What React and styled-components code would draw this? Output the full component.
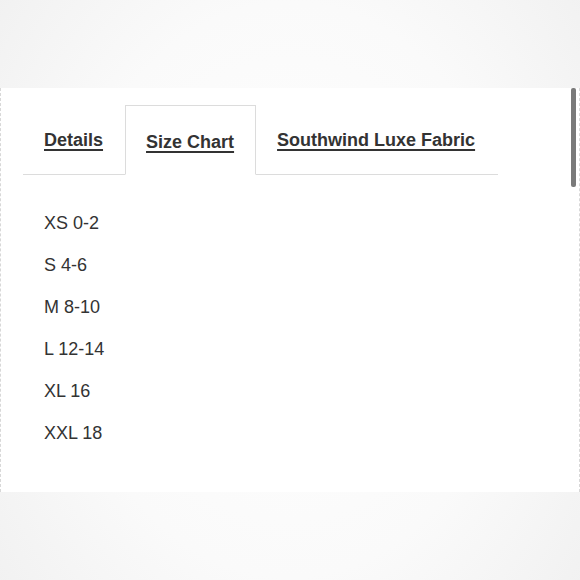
import { useState } from "react";
import styled, { createGlobalStyle } from "styled-components";

const GlobalStyle = createGlobalStyle`
  html, body {
    margin: 0;
    padding: 0;
    width: 580px;
    height: 580px;
    overflow: hidden;
  }
  body {
    background: radial-gradient(ellipse 70% 90% at 50% 50%, #ffffff 0%, #fafafa 55%, #efefef 100%);
    font-family: "Liberation Sans", Arial, sans-serif;
    color: #333;
  }
`;

const tabs = ["Details", "Size Chart", "Southwind Luxe Fabric"];
const sizes = ["XS 0-2", "S 4-6", "M 8-10", "L 12-14", "XL 16", "XXL 18"];

export default function App() {
  const [active, setActive] = useState(1);

  return (
    <>
      <GlobalStyle />
      <Page>
        <Panel>
          <TabBar>
            {tabs.map((label, i) => (
              <Tab key={label} $active={i === active} onClick={() => setActive(i)}>
                <TabLink>{label}</TabLink>
              </Tab>
            ))}
          </TabBar>
          <SizeList>
            {sizes.map((s) => (
              <SizeItem key={s}>{s}</SizeItem>
            ))}
          </SizeList>
          <ScrollThumb />
        </Panel>
      </Page>
    </>
  );
}

const Page = styled.div`
  padding-top: 88px;
`;

const Panel = styled.div`
  position: relative;
  box-sizing: border-box;
  height: 404px;
  background: #fff;
  border-left: 1px dashed #d8d8d8;
  border-right: 1px dashed #d8d8d8;
  padding: 17px 0 0 22px;
`;

const TabBar = styled.ul`
  display: flex;
  list-style: none;
  margin: 0;
  padding: 0;
  width: 475px;
  border-bottom: 1px solid #dcdcdc;
`;

const Tab = styled.li`
  box-sizing: border-box;
  height: 70px;
  margin-bottom: -1px;
  padding: ${(p) => (p.$active ? "25px 21px 0 20px" : "23px 21px 0 20px")};
  border: 1px solid ${(p) => (p.$active ? "#dcdcdc" : "transparent")};
  border-bottom: ${(p) => (p.$active ? "1px solid #fff" : "none")};
  background: ${(p) => (p.$active ? "#fff" : "transparent")};
  cursor: pointer;
`;

const TabLink = styled.a`
  font-size: 18px;
  font-weight: bold;
  line-height: 22px;
  color: #333;
  text-decoration: underline;
  text-underline-offset: 3px;
  text-decoration-thickness: 2px;
  white-space: nowrap;
`;

const SizeList = styled.div`
  display: flex;
  flex-direction: column;
  gap: 20px;
  padding: 37px 0 0 21px;
`;

const SizeItem = styled.div`
  font-size: 18px;
  line-height: 22px;
  color: #333;
`;

const ScrollThumb = styled.div`
  position: absolute;
  top: 0;
  right: 3px;
  width: 5px;
  height: 99px;
  border-radius: 2px;
  background: #7a7a7a;
`;
